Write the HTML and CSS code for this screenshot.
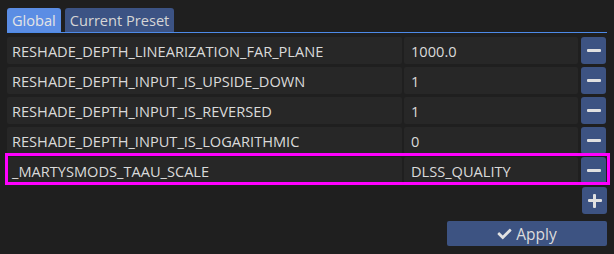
FILE: index.html
```html
<!DOCTYPE html>
<html>
<head>
<meta charset="utf-8">
<link rel="stylesheet" href="styles.css">
</head>
<body>
<div class="panel">
  <div class="tabs">
    <div class="tab active">Global</div>
    <div class="tab">Current Preset</div>
  </div>
  <div class="rows">
    <div class="row">
      <div class="field name">RESHADE_DEPTH_LINEARIZATION_FAR_PLANE</div>
      <div class="field value">1000.0</div>
      <div class="btn"><span class="minus"></span></div>
    </div>
    <div class="row">
      <div class="field name">RESHADE_DEPTH_INPUT_IS_UPSIDE_DOWN</div>
      <div class="field value">1</div>
      <div class="btn"><span class="minus"></span></div>
    </div>
    <div class="row">
      <div class="field name">RESHADE_DEPTH_INPUT_IS_REVERSED</div>
      <div class="field value">1</div>
      <div class="btn"><span class="minus"></span></div>
    </div>
    <div class="row">
      <div class="field name">RESHADE_DEPTH_INPUT_IS_LOGARITHMIC</div>
      <div class="field value">0</div>
      <div class="btn"><span class="minus"></span></div>
    </div>
    <div class="row highlighted">
      <div class="field name">_MARTYSMODS_TAAU_SCALE</div>
      <div class="field value">DLSS_QUALITY</div>
      <div class="btn"><span class="minus"></span></div>
      <div class="highlight"></div>
    </div>
    <div class="row add-row">
      <div class="btn"><span class="plus"></span></div>
    </div>
  </div>
  <div class="footer">
    <div class="apply">
      <svg class="check" viewBox="0 0 512 512" width="15" height="14"><path fill="#e2e2e2" d="M173.9 439.4L7.5 273c-10-10-10-26.2 0-36.2l36.2-36.2c10-10 26.2-10 36.2 0L192 312.7 432.1 72.6c10-10 26.2-10 36.2 0l36.2 36.2c10 10 10 26.2 0 36.2L210.1 439.4c-10 10-26.2 10-36.2 0z"/></svg>
      <span>Apply</span>
    </div>
  </div>
</div>
</body>
</html>
```

FILE: styles.css
```css
html, body {
  margin: 0;
  padding: 0;
  background: #1f1f1f;
}
body {
  font-family: "Open Sans", "Noto Sans", sans-serif;
  font-size: 14.6px;
  color: #dadada;
}
.panel {
  padding: 8px 7px 0 7px;
}
.tabs {
  display: flex;
  gap: 4px;
  height: 24px;
  border-bottom: 1px solid #4d8ae8;
}
.tab {
  display: flex;
  align-items: center;
  padding: 0 5px;
  background: #3c5384;
  border-radius: 3px 3px 0 0;
  color: #d6d6d6;
  line-height: 1;
}
.tab.active {
  background: #5b8de4;
  color: #e4e4e4;
}
.rows {
  margin-top: 4px;
  display: flex;
  flex-direction: column;
  gap: 3px;
}
.row {
  position: relative;
  display: grid;
  grid-template-columns: 395px 174px 26px;
  column-gap: 2px;
  height: 27px;
}
.row .btn {
  margin-left: 1px;
}
.field {
  background: #272727;
  border-radius: 2px;
  display: flex;
  align-items: center;
  padding-left: 5px;
  white-space: nowrap;
  overflow: hidden;
}
.field.value {
  padding-left: 7px;
}
.btn {
  background: #3d5382;
  border-radius: 3px;
  display: flex;
  align-items: center;
  justify-content: center;
  position: relative;
}
.minus {
  display: block;
  width: 14px;
  height: 3px;
  background: #e0e0e0;
  border-radius: 1px;
}
.plus {
  display: block;
  width: 14px;
  height: 14px;
  position: relative;
}
.plus::before, .plus::after {
  content: "";
  position: absolute;
  background: #e0e0e0;
  border-radius: 1px;
}
.plus::before {
  left: 0;
  top: 5.5px;
  width: 14px;
  height: 3px;
}
.plus::after {
  top: 0;
  left: 5.5px;
  width: 3px;
  height: 14px;
}
.add-row {
  grid-template-columns: 1fr 26px;
}
.add-row .btn {
  grid-column: 2;
}
.highlight {
  position: absolute;
  left: -2px;
  top: -4px;
  width: 605px;
  height: 32px;
  border: 3px solid #ff00ff;
  box-sizing: border-box;
  pointer-events: none;
}
.footer {
  display: flex;
  justify-content: flex-end;
  margin-top: 7px;
}
.apply {
  width: 160px;
  height: 25px;
  background: #3d5382;
  border-radius: 2px;
  display: flex;
  align-items: center;
  justify-content: center;
  gap: 4px;
  color: #dcdcdc;
  font-size: 15.5px;
}
.check {
  display: block;
}
```
